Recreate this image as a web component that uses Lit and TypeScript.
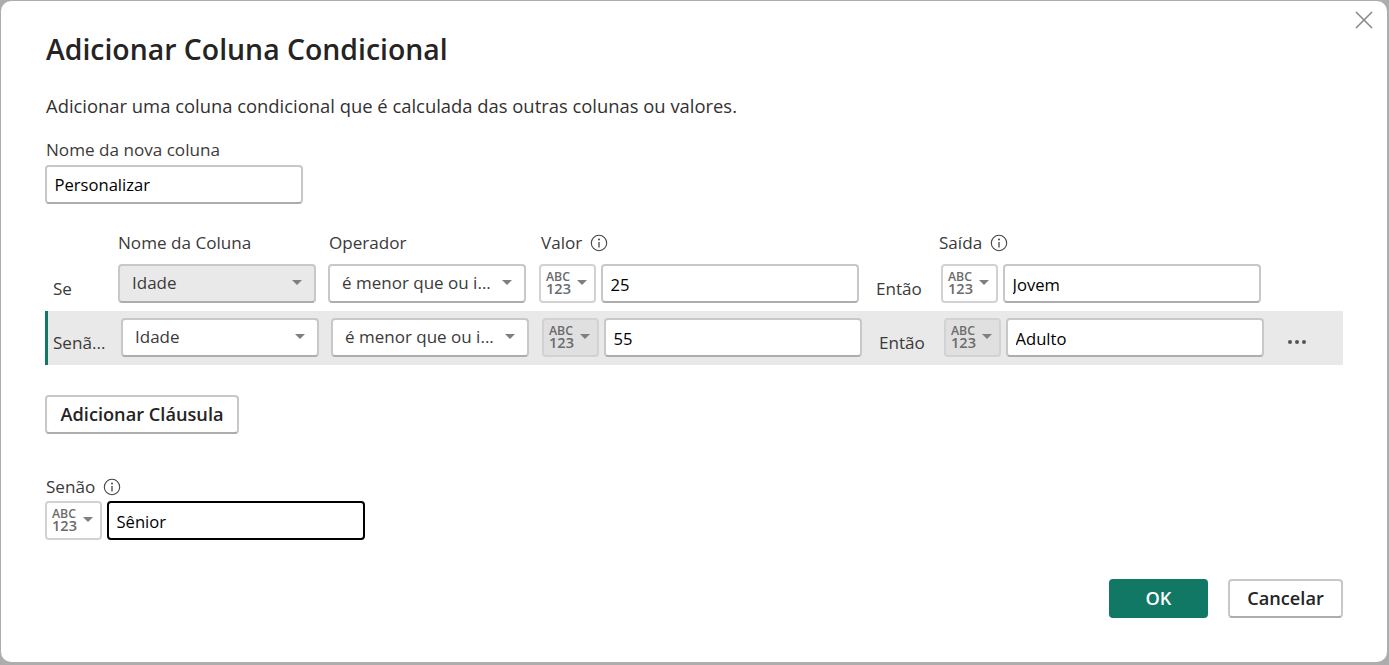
import { LitElement, html, css } from "lit";
import { customElement } from "lit/decorators.js";

const info = html`<svg class="info" width="18" height="18" viewBox="0 0 18 18"><circle cx="9" cy="9" r="7.7" fill="none" stroke="#444" stroke-width="1.1"/><circle cx="9" cy="5.4" r="1" fill="#444"/><path d="M9 8v5.4" stroke="#444" stroke-width="1.3" fill="none"/></svg>`;

const typeBtn = (shade = false) => html`<div class="type ${shade ? "shade" : ""}">
  <svg class="abc" width="26" height="25" viewBox="0 0 26 25">
    <text x="1" y="10" font-size="12" textLength="24" lengthAdjust="spacingAndGlyphs">ABC</text>
    <text x="1" y="23" font-size="15" textLength="25" lengthAdjust="spacingAndGlyphs">123</text>
  </svg>
  <span class="caret small"></span>
</div>`;

const select = (text: string, shade = false) => html`<div class="select ${shade ? "shade" : ""}"><span>${text}</span><span class="caret"></span></div>`;

@customElement("app-root")
export class AppRoot extends LitElement {
  static styles = css`
    :host { display: block; width: 1389px; height: 665px; background: #adadad; overflow: hidden; font-family: "Open Sans", "Noto Sans", sans-serif; color: #323130; }
    * { box-sizing: border-box; }
    .frame { padding: 1px 2px 0 1px; }
    .dialog { position: relative; height: 661px; background: #fff; border-radius: 10px; padding: 0 44px 0 44px; }
    .close { position: absolute; right: 13px; top: 9px; }
    h1 { margin: 0; padding: 30px 0 0 1px; height: 81px; font-size: 28.4px; line-height: 37px; font-weight: 600; color: #252423; white-space: nowrap; }
    .desc { height: 51px; padding: 11px 0 0 1px; font-size: 18.4px; line-height: 25px; white-space: nowrap; }
    .lab { font-size: 17.1px; line-height: 22px; color: #3b3a39; white-space: nowrap; padding-left: 1px; }
    .nm { height: 32px; padding-top: 6px; }
    input { display: block; width: 258px; height: 39px; border: 2px solid #c8c8c8; border-bottom-color: #adadad; border-radius: 4px; background: #fff; padding: 2px 7px 0 7.5px; font: inherit; font-size: 16.6px; color: #000; outline: none; }
    input.first { padding-top: 0; }
    input.focus { border-color: #000; }
    .heads { display: flex; margin-top: 25px; padding-left: 73px; height: 28px; align-items: flex-start; }
    .heads .lab { display: flex; align-items: center; gap: 8px; height: 28px; padding-left: 0; }
    .h1 { width: 211px; } .h2 { width: 212px; } .h3 { width: 398px; }
    .row { display: flex; align-items: center; height: 54px; padding: 7px 0 8px 8px; }
    .row.active { background: #e9e9e9; border-left: 3px solid #117865; padding-left: 5px; }
    .row .rl { align-self: flex-end; width: 65px; font-size: 17.1px; line-height: 22px; color: #3b3a39; transform: translateY(-3px); white-space: nowrap; }
    .row.active .rl { width: 68px; }
    .select { display: flex; align-items: center; justify-content: space-between; width: 198px; height: 39px; border: 2px solid #c8c8c8; border-bottom-color: #adadad; border-radius: 4px; background: #fff; padding: 0 12px 2px 12px; font-size: 17px; margin-right: 12px; white-space: nowrap; color: #3b3a39; }
    .select.shade { background: #e9e9e9; }
    .caret { width: 0; height: 0; border-left: 5px solid transparent; border-right: 5px solid transparent; border-top: 5px solid #7f7f7f; flex: none; }
    .caret.small { margin-bottom: 2px; }
    .type { display: flex; align-items: center; gap: 6px; width: 57px; height: 39px; border: 2px solid #d2d2d2; border-radius: 4px; background: #fff; padding-left: 4px; margin-left: 1px; margin-right: 5px; flex: none; }
    .type.shade { background: #e0e0e0; }
    .abc { flex: none; overflow: visible; font-weight: 600; fill: #6b6b6b; font-family: "Open Sans", sans-serif; }
    .then { width: 81px; padding-left: 17px; align-self: flex-end; font-size: 17.1px; line-height: 22px; color: #3b3a39; transform: translateY(-3px); flex: none; }
    .dots { display: flex; gap: 3px; margin: 9px 0 0 24px; }
    .dots i { width: 4px; height: 4px; border-radius: 50%; background: #555; }
    .btn { display: flex; align-items: center; justify-content: center; height: 39px; border: 2px solid #c8c8c8; border-bottom-color: #adadad; border-radius: 4px; background: #fff; padding-bottom: 2px; font-size: 18.2px; font-weight: 600; color: #252423; white-space: nowrap; }
    .add { width: 194px; margin-top: 30px; }
    .else { margin-top: 40px; height: 25px; display: flex; align-items: center; gap: 8px; }
    .else-row { display: flex; margin-top: 2px; }
    .else-row .type { margin-left: 0; }
    .foot { display: flex; justify-content: flex-end; gap: 20px; margin-top: 39px; }
    .ok { width: 99px; background: #117865; border-color: #117865; color: #fff; }
    .cancel { width: 115px; }
  `;

  render() {
    return html`<div class="frame"><div class="dialog">
      <svg class="close" width="20" height="20" viewBox="0 0 20 20"><path d="M2 2l16 16M18 2L2 18" stroke="#8a8a8a" stroke-width="1.6" fill="none"/></svg>
      <h1>Adicionar Coluna Condicional</h1>
      <div class="desc">Adicionar uma coluna condicional que é calculada das outras colunas ou valores.</div>
      <div class="lab nm">Nome da nova coluna</div>
      <input class="first" .value=${"Personalizar"} />
      <div class="heads">
        <div class="lab h1">Nome da Coluna</div>
        <div class="lab h2">Operador</div>
        <div class="lab h3">Valor ${info}</div>
        <div class="lab">Saída ${info}</div>
      </div>
      <div class="row">
        <div class="rl">Se</div>
        ${select("Idade", true)}${select("é menor que ou i...")}
        ${typeBtn()}<input .value=${"25"} />
        <div class="then">Então</div>
        ${typeBtn()}<input .value=${"Jovem"} />
      </div>
      <div class="row active">
        <div class="rl">Senã...</div>
        ${select("Idade")}${select("é menor que ou i...")}
        ${typeBtn(true)}<input .value=${"55"} />
        <div class="then">Então</div>
        ${typeBtn(true)}<input .value=${"Adulto"} />
        <div class="dots"><i></i><i></i><i></i></div>
      </div>
      <div class="btn add">Adicionar Cláusula</div>
      <div class="lab else">Senão ${info}</div>
      <div class="else-row">${typeBtn()}<input class="focus" .value=${"Sênior"} /></div>
      <div class="foot"><div class="btn ok">OK</div><div class="btn cancel">Cancelar</div></div>
    </div></div>`;
  }
}
